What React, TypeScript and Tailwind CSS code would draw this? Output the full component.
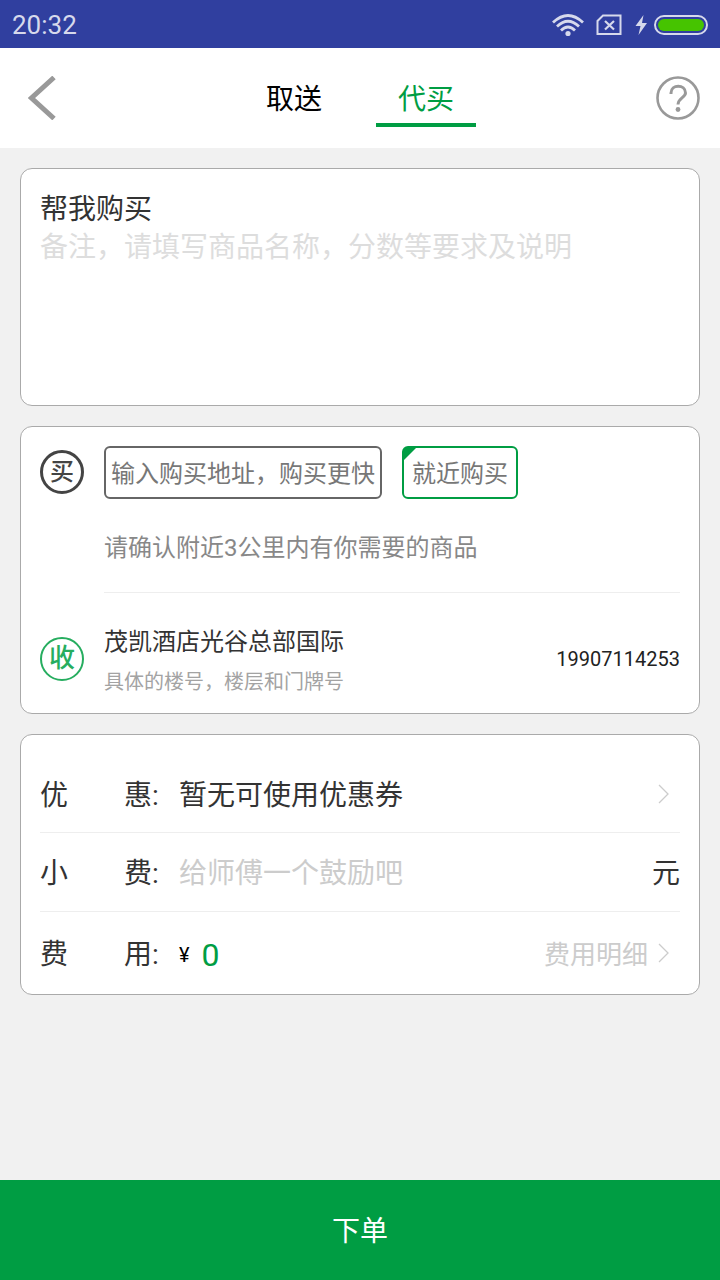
import type { ReactNode } from "react";

function StatusBar() {
  return (
    <div className="flex h-12 items-center justify-between bg-[#303f9f] px-3 pt-px text-[#d6d9ec]">
      <span className="pt-px text-[26px] leading-8">20:32</span>
      <div className="flex items-center">
        <svg width="32" height="24" viewBox="0 0 32 24" fill="none" stroke="currentColor" strokeWidth="2.800">
          <path d="M1 9.500Q16 -4.500 31 9.500" />
          <path d="M5 13.500Q16 3 27 13.500" />
          <path d="M9 17.500Q16 10.500 23 17.500" />
          <circle cx="16" cy="20.500" r="2.600" fill="currentColor" stroke="none" />
        </svg>
        <svg className="ml-3" width="26" height="22" viewBox="0 0 26 22" fill="none" stroke="currentColor" strokeWidth="2">
          <path d="M7 1.500H24.500V20H1.500V7Z" />
          <path d="M9 7L18 15.500M18 7L9 15.500" strokeWidth="2.200" />
        </svg>
        <svg className="ml-3" width="14" height="22" viewBox="0 0 14 22" fill="currentColor">
          <path d="M9.500 1L1.500 12H6.500L4.500 21L13 9H8Z" />
        </svg>
        <div className="ml-[6px] h-5 w-[54px] rounded-full border-2 border-[#d6d9ec] p-[2px]">
          <div className="h-full rounded-full bg-[#46c400]" />
        </div>
      </div>
    </div>
  );
}

function Header() {
  return (
    <header className="flex h-[100px] items-center justify-between bg-white pl-7 pr-5">
      <button type="button" aria-label="返回" className="w-9">
        <svg width="28" height="44" viewBox="0 0 28 44" fill="none" stroke="#999" strokeWidth="5">
          <path d="M26 1.500L3.500 22L26 42.500" />
        </svg>
      </button>
      <nav className="mt-1 flex gap-8 text-[28px]">
        <button type="button" className="h-[54px] w-[100px] border-b-4 border-transparent pt-1 text-black">
          取送
        </button>
        <button type="button" className="h-[54px] w-[100px] border-b-4 border-[#009d43] pt-1 text-[#009d43]">
          代买
        </button>
      </nav>
      <button type="button" aria-label="帮助">
        <svg width="44" height="44" viewBox="0 0 44 44" fill="none" stroke="#999">
          <circle cx="22" cy="22" r="20.500" strokeWidth="2.600" />
          <path d="M15 18V17C15 8 29.500 8 29.500 17C29.500 21.500 22 22 22 28.500" strokeWidth="3" />
          <circle cx="22" cy="33.500" r="2.400" fill="#999" stroke="none" />
        </svg>
      </button>
    </header>
  );
}

function Card({ children }: { children: ReactNode }) {
  return <section className="rounded-xl border border-[#aaa] bg-white px-[19px]">{children}</section>;
}

function Chevron() {
  return (
    <svg className="mb-1 mr-2" width="16" height="20" viewBox="0 0 16 20" fill="none" stroke="#ccc" strokeWidth="1.300">
      <path d="M3 1L12 10L3 19" />
    </svg>
  );
}

export default function App() {
  return (
    <div className="flex min-h-screen flex-col bg-[#f1f1f1] text-[#333] [font-family:Roboto,'Noto_Sans_CJK_SC',sans-serif]">
      <StatusBar />
      <Header />
      <main className="flex flex-1 flex-col gap-5 p-5">
        <Card>
          <div className="flex h-[236px] flex-col pt-[22px] text-[28px] leading-[38px]">
            <label htmlFor="remark">帮我购买</label>
            <textarea
              id="remark"
              placeholder="备注，请填写商品名称，分数等要求及说明"
              className="flex-1 resize-none outline-none placeholder:text-[#ddd]"
            />
          </div>
        </Card>

        <Card>
          <div className="flex gap-5 pt-[19px]">
            <span className="mt-1 flex size-11 shrink-0 items-center justify-center rounded-full border-[3px] border-[#444] text-2xl font-medium text-[#444]">
              买
            </span>
            <div className="flex-1 border-b border-[#eee] text-2xl">
              <div className="flex gap-5 text-[#777]">
                <button type="button" className="h-[53px] rounded-md border-2 border-[#666] px-[5px] pt-[2px]">
                  输入购买地址，购买更快
                </button>
                <button type="button" className="relative h-[53px] rounded-md border-2 border-[#009d43] px-2 pt-[2px]">
                  <svg className="absolute left-0 top-0" width="12" height="12" viewBox="0 0 12 12" fill="#009d43">
                    <path d="M0 0H12L0 12Z" />
                  </svg>
                  就近购买
                </button>
              </div>
              <p className="pb-7 pt-[33px] text-[#888]">请确认附近3公里内有你需要的商品</p>
            </div>
          </div>
          <div className="flex items-center gap-5 pb-[17px] pt-7">
            <span className="flex size-11 shrink-0 items-center justify-center rounded-full border-2 border-[#26ad5f] text-[26px] font-medium text-[#26ad5f]">
              收
            </span>
            <div className="flex-1 pt-[5px]">
              <p className="text-2xl">茂凯酒店光谷总部国际</p>
              <p className="mt-[10px] text-xl text-[#a3a3a3]">具体的楼号，楼层和门牌号</p>
            </div>
            <span className="text-xl text-[#222]">19907114253</span>
          </div>
        </Card>

        <Card>
          <div className="text-[28px] leading-10">
            <div className="mt-5 flex h-[78px] items-center border-b border-[#eee] pt-1">
              <span className="w-[139px]">优　　惠:</span>
              <span className="flex-1">暂无可使用优惠券</span>
              <Chevron />
            </div>
            <div className="flex h-[79px] items-center border-b border-[#eee] pt-1">
              <label htmlFor="tip" className="w-[139px]">
                小　　费:
              </label>
              <input
                id="tip"
                type="text"
                placeholder="给师傅一个鼓励吧"
                className="min-w-0 flex-1 outline-none placeholder:text-[#ccc]"
              />
              <span>元</span>
            </div>
            <div className="flex h-[82px] items-center pt-1">
              <span className="w-[139px]">费　　用:</span>
              <span className="text-xl text-black">¥</span>
              <span className="ml-3 flex-1 text-[32px] text-[#009d43]">0</span>
              <button type="button" className="flex items-center gap-2 text-[26px] text-[#ccc]">
                费用明细
                <Chevron />
              </button>
            </div>
          </div>
        </Card>
      </main>
      <button type="button" className="h-[100px] bg-[#009d43] pt-1 text-[28px] text-white">
        下单
      </button>
    </div>
  );
}
